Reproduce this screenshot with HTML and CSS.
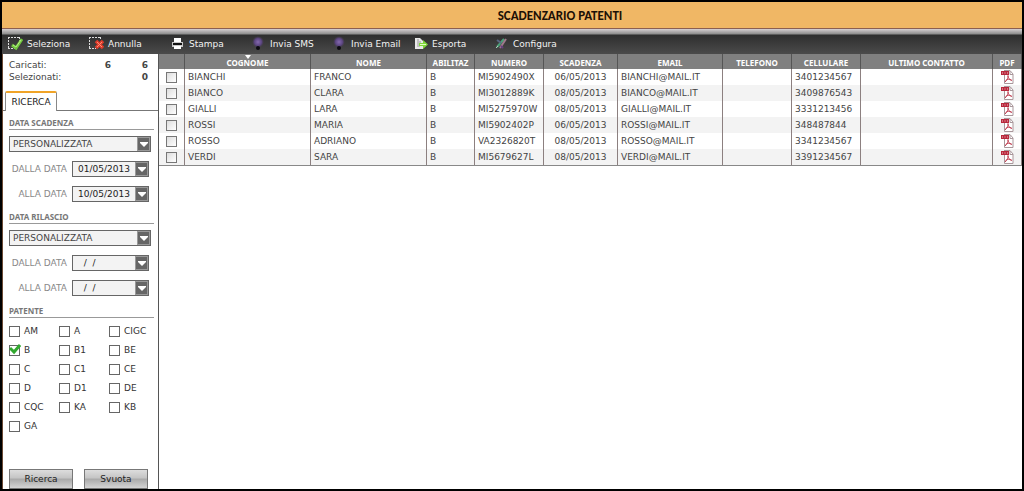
FILE: index.html
```html
<!DOCTYPE html>
<html lang="it">
<head>
<meta charset="utf-8">
<title>Scadenzario patenti</title>
<link rel="stylesheet" href="styles.css">
</head>
<body>
<svg class="defs" aria-hidden="true">
  <symbol id="pdf" viewBox="0 0 14 14">
    <path d="M4 .5h6l3 3.500v9.500H4.500V5" fill="#fff" stroke="#a9979b"/>
    <path d="M10 1v3.500h3" fill="none" stroke="#a9979b"/>
    <path d="M1 1h8v4H1z" fill="#b8283c"/>
    <path d="M2 3h1M4.500 3h1M7 3h1" stroke="#f0c4ca"/>
    <path d="M8 5.500c.7 2-1 5-3 6.500M8 5.500c-.5 2 1.500 4.500 4 5M5.500 10.500c2-1.500 4-1.500 6-.5" fill="none" stroke="#c4485a"/>
  </symbol>
  <symbol id="arrow" viewBox="0 0 8 5"><path d="M0 0h8v1L4 5 0 1z" fill="#fff"/></symbol>
  <symbol id="orb" viewBox="0 0 16 16">
    <circle cx="8" cy="6" r="6" fill="url(#violet)"/>
    <circle cx="8" cy="12" r="2" fill="#0b0910"/>
  </symbol>
  <radialGradient id="violet"><stop offset="0" stop-color="#8469ae"/><stop offset=".6" stop-color="#5b4580"/><stop offset="1" stop-color="#463a57" stop-opacity="0"/></radialGradient>
</svg>
<div class="app">
  <header class="title"><h1>SCADENZARIO PATENTI</h1></header>
  <nav class="toolbar">
    <button type="button" class="tool"><svg class="icon" viewBox="0 0 16 16"><path d="M1.500 1v12M1 1.500h12M1 12.500h8M12.500 1v5" fill="none" stroke="#ddd" stroke-dasharray="2 1"/><path d="M5 9l4 3 6-9" fill="none" stroke="#72c83e" stroke-width="3"/><path d="M6 9l3 2 5-7" fill="none" stroke="#b6ed86"/></svg>Seleziona</button>
    <button type="button" class="tool"><svg class="icon" viewBox="0 0 16 16"><path d="M1.500 1v12M1 1.500h12M1 12.500h7M12.500 1v3" fill="none" stroke="#ddd" stroke-dasharray="2 1"/><path d="M8 5l7 7M15 5l-7 7" stroke="#df3c2b" stroke-width="3.500"/><path d="M9 6l5 5M14 6l-5 5" stroke="#ff8c76"/></svg>Annulla</button>
    <button type="button" class="tool"><svg class="icon" viewBox="0 0 16 16"><path d="M5 2h7v4H5z" fill="#fff"/><path d="M3 6h11v5H3z" fill="#c9c9c9"/><path d="M4 7h9v2H4z" fill="#111"/><path d="M5 10h7v3H5z" fill="#fff"/></svg>Stampa</button>
    <button type="button" class="tool"><svg class="icon"><use href="#orb"/></svg>Invia SMS</button>
    <button type="button" class="tool"><svg class="icon"><use href="#orb"/></svg>Invia Email</button>
    <button type="button" class="tool"><svg class="icon" viewBox="0 0 16 16"><path d="M3 2h5l3 3v8H3z" fill="#e8e8e8"/><path d="M5 4h2M5 6h4M5 8h3M5 10h3" stroke="#999"/><path d="M7 7h4V4l5 4.500-5 4.500v-3H7z" fill="#7fd63c"/><path d="M8 8.500h6" stroke="#e0ffbd"/></svg>Esporta</button>
    <button type="button" class="tool"><svg class="icon" viewBox="0 0 16 16"><path d="M4 11l7-8" stroke="#4ba178" stroke-width="2"/><path d="M7 12l6-9" stroke="#a17a8d" stroke-width="2"/><path d="M4 4l4 3" stroke="#596782" stroke-width="2"/><path d="M8 10l2 2" stroke="#684080" stroke-width="2"/><path d="M3 12l2-2" stroke="#b0cfbd"/></svg>Configura</button>
  </nav>
  <div class="content">
    <aside class="sidebar">
      <dl class="counts">
        <dt>Caricati:</dt><dd>6</dd><dd>6</dd>
        <dt>Selezionati:</dt><dd></dd><dd>0</dd>
      </dl>
      <div class="tabs"><button type="button" class="tab">RICERCA</button></div>
      <form class="filters">
        <section class="group">
          <h2>DATA SCADENZA</h2>
          <div class="combo"><select aria-label="Data scadenza"><option>PERSONALIZZATA</option></select><span class="drop"><svg class="arrow"><use href="#arrow"/></svg></span></div>
          <div class="date"><label for="s1">DALLA DATA</label><div class="combo"><input id="s1" type="text" value="01/05/2013"><button type="button" class="drop" aria-label="Apri calendario"><svg class="arrow"><use href="#arrow"/></svg></button></div></div>
          <div class="date"><label for="s2">ALLA DATA</label><div class="combo"><input id="s2" type="text" value="10/05/2013"><button type="button" class="drop" aria-label="Apri calendario"><svg class="arrow"><use href="#arrow"/></svg></button></div></div>
        </section>
        <section class="group">
          <h2>DATA RILASCIO</h2>
          <div class="combo"><select aria-label="Data rilascio"><option>PERSONALIZZATA</option></select><span class="drop"><svg class="arrow"><use href="#arrow"/></svg></span></div>
          <div class="date"><label for="r1">DALLA DATA</label><div class="combo"><input id="r1" type="text" value="  /  /"><button type="button" class="drop" aria-label="Apri calendario"><svg class="arrow"><use href="#arrow"/></svg></button></div></div>
          <div class="date"><label for="r2">ALLA DATA</label><div class="combo"><input id="r2" type="text" value="  /  /"><button type="button" class="drop" aria-label="Apri calendario"><svg class="arrow"><use href="#arrow"/></svg></button></div></div>
        </section>
        <section class="group">
          <h2>PATENTE</h2>
          <div class="checks">
            <label><input type="checkbox">AM</label><label><input type="checkbox">A</label><label><input type="checkbox">CIGC</label>
            <label><input type="checkbox" checked><svg class="tick" viewBox="0 0 12 11"><path d="M1 4l4 4 6-7" fill="none" stroke="#31a82f" stroke-width="3"/></svg>B</label><label><input type="checkbox">B1</label><label><input type="checkbox">BE</label>
            <label><input type="checkbox">C</label><label><input type="checkbox">C1</label><label><input type="checkbox">CE</label>
            <label><input type="checkbox">D</label><label><input type="checkbox">D1</label><label><input type="checkbox">DE</label>
            <label><input type="checkbox">CQC</label><label><input type="checkbox">KA</label><label><input type="checkbox">KB</label>
            <label><input type="checkbox">GA</label>
          </div>
        </section>
        <div class="actions"><button type="button">Ricerca</button><button type="button">Svuota</button></div>
      </form>
    </aside>
    <main class="results">
      <table>
        <colgroup><col class="c-sel"><col class="c-surname"><col class="c-name"><col class="c-lic"><col class="c-num"><col class="c-exp"><col class="c-mail"><col class="c-tel"><col class="c-tel"><col class="c-last"><col class="c-pdf"></colgroup>
        <thead><tr><th></th><th><svg class="sort" viewBox="0 0 6 4"><path d="M0 0h6L3 4z" fill="#fff"/></svg>COGNOME</th><th>NOME</th><th>ABILITAZ</th><th>NUMERO</th><th>SCADENZA</th><th>EMAIL</th><th>TELEFONO</th><th>CELLULARE</th><th>ULTIMO CONTATTO</th><th>PDF</th></tr></thead>
        <tbody>
          <tr><td><input type="checkbox" aria-label="Bianchi Franco"></td><td>BIANCHI</td><td>FRANCO</td><td>B</td><td>MI5902490X</td><td>06/05/2013</td><td>BIANCHI@MAIL.IT</td><td></td><td>3401234567</td><td></td><td><svg class="pdf"><use href="#pdf"/></svg></td></tr>
          <tr><td><input type="checkbox" aria-label="Bianco Clara"></td><td>BIANCO</td><td>CLARA</td><td>B</td><td>MI3012889K</td><td>08/05/2013</td><td>BIANCO@MAIL.IT</td><td></td><td>3409876543</td><td></td><td><svg class="pdf"><use href="#pdf"/></svg></td></tr>
          <tr><td><input type="checkbox" aria-label="Gialli Lara"></td><td>GIALLI</td><td>LARA</td><td>B</td><td>MI5275970W</td><td>08/05/2013</td><td>GIALLI@MAIL.IT</td><td></td><td>3331213456</td><td></td><td><svg class="pdf"><use href="#pdf"/></svg></td></tr>
          <tr><td><input type="checkbox" aria-label="Rossi Maria"></td><td>ROSSI</td><td>MARIA</td><td>B</td><td>MI5902402P</td><td>06/05/2013</td><td>ROSSI@MAIL.IT</td><td></td><td>348487844</td><td></td><td><svg class="pdf"><use href="#pdf"/></svg></td></tr>
          <tr><td><input type="checkbox" aria-label="Rosso Adriano"></td><td>ROSSO</td><td>ADRIANO</td><td>B</td><td>VA2326820T</td><td>08/05/2013</td><td>ROSSO@MAIL.IT</td><td></td><td>3341234567</td><td></td><td><svg class="pdf"><use href="#pdf"/></svg></td></tr>
          <tr><td><input type="checkbox" aria-label="Verdi Sara"></td><td>VERDI</td><td>SARA</td><td>B</td><td>MI5679627L</td><td>08/05/2013</td><td>VERDI@MAIL.IT</td><td></td><td>3391234567</td><td></td><td><svg class="pdf"><use href="#pdf"/></svg></td></tr>
        </tbody>
      </table>
    </main>
  </div>
</div>
</body>
</html>
```
FILE: styles.css
```css
* { box-sizing: border-box; }

body {
  margin: 0;
  background: #000;
  color: #444;
  font: 9px/12px Verdana, "DejaVu Sans", sans-serif;
}

button, input, select {
  margin: 0;
  padding: 0;
  border: 0;
  background: none;
  color: inherit;
  font: inherit;
  appearance: none;
}

h1, h2, dl, dd { margin: 0; }

.defs {
  position: absolute;
  width: 0;
  height: 0;
}

.app {
  display: flex;
  flex-direction: column;
  min-height: 100vh;
  border: 2px solid #000;
}

.title {
  padding: 5px 0 4px 96px;
  border-bottom: 1px solid #8c5f50;
  background: #f0b765;
  text-align: center;
}

.title h1 {
  color: #1c1006;
  font: bold 13px/17px Carlito, "Open Sans", sans-serif;
}

.toolbar {
  display: flex;
  padding: 5px 0 0 5px;
  background: linear-gradient(#d6d0d2, #8c8c8c 5px, #2e2e2e 6px, #4b4b4b);
}

.tool {
  display: flex;
  flex: 0 0 81px;
  align-items: center;
  gap: 4px;
  height: 20px;
  color: #f2f2f2;
  white-space: nowrap;
}

.icon {
  flex: none;
  width: 16px;
  height: 16px;
}

.content {
  display: flex;
  flex: 1;
  border-left: 1px solid #6b4a35;
  background: #fff;
}

.sidebar {
  flex: 0 0 156px;
  min-width: 0;
  border-right: 1px solid #555;
}

.counts {
  display: grid;
  grid-template-columns: 66px 36px 37px;
  padding: 5px 5px 8px 6px;
}

.counts dd {
  font-weight: bold;
  text-align: right;
}

.tabs {
  display: flex;
  padding-left: 2px;
  border-bottom: 1px solid #777;
}

.tab {
  width: 52px;
  height: 20px;
  margin-bottom: -1px;
  border: 1px solid #888;
  border-top: 2px solid #f0a428;
  border-bottom: 0;
  border-radius: 2px 2px 0 0;
  background: #fff;
  color: #222;
}

.filters { padding: 5px 4px 0 6px; }

.group { margin-bottom: 8px; }

.group h2 {
  margin-bottom: 6px;
  border-bottom: 1px solid #999;
  color: #777;
  font: bold 8px/13px "Noto Sans", sans-serif;
}

.combo {
  display: flex;
  width: 142px;
  height: 16px;
  border: 1px solid #666;
  background: #f3f3f3;
}

.combo select, .combo input {
  flex: 1;
  min-width: 0;
  padding-left: 3px;
  white-space: pre;
}

.combo input { padding-left: 5px; }

.drop {
  display: flex;
  flex: 0 0 13px;
  align-items: center;
  justify-content: center;
  border: 1px solid #999;
  background: #666;
}

.arrow {
  width: 8px;
  height: 5px;
}

.date {
  display: flex;
  align-items: center;
  justify-content: space-between;
  width: 140px;
  margin-top: 9px;
  color: #888;
}

.date label {
  width: 58px;
  text-align: right;
}

.date .combo {
  width: 77px;
  color: #222;
}

.checks {
  display: grid;
  grid-template-columns: 50px 50px 1fr;
  row-gap: 7px;
  padding-top: 1px;
}

.checks label {
  position: relative;
  display: flex;
  align-items: center;
  gap: 4px;
  color: #333;
}

.checks input {
  width: 11px;
  height: 11px;
  border: 1px solid #666;
  background: #fff;
}

.tick {
  position: absolute;
  top: 0;
  left: 0;
  width: 12px;
  height: 11px;
}

.actions {
  display: flex;
  gap: 11px;
  padding-top: 29px;
}

.actions button {
  width: 64px;
  height: 20px;
  border: 1px solid #777;
  background: linear-gradient(#ddd, #c4c4c4 45%, #a9a9a9 50%, #d4d4d4);
  color: #222;
}

.results {
  flex: 1;
  min-width: 0;
}

table {
  width: 100%;
  border-collapse: separate;
  border-spacing: 0;
  border-bottom: 1px solid #888;
  table-layout: fixed;
}

.c-sel { width: 26px; }
.c-surname { width: 126px; }
.c-name { width: 116px; }
.c-lic { width: 48px; }
.c-num { width: 69px; }
.c-exp { width: 74px; }
.c-mail { width: 105px; }
.c-tel { width: 69px; }
.c-last { width: 132px; }
.c-pdf { width: 29px; }

th {
  position: relative;
  height: 15px;
  padding: 3px 0 0;
  border-right: 1px solid #555;
  background: #808080;
  color: #fff;
  font: bold 8px/12px "Noto Sans", sans-serif;
}

.sort {
  position: absolute;
  top: 1px;
  left: calc(50% - 3px);
  width: 6px;
  height: 4px;
}

td {
  height: 16px;
  padding: 0 0 0 3px;
  border-right: 1px solid #8c8080;
  line-height: 16px;
  white-space: nowrap;
}

tbody tr:nth-child(even) { background: #f3f3f3; }

td:first-child, td:last-child, td:nth-child(6) {
  padding: 0;
  text-align: center;
}

td input {
  display: block;
  width: 11px;
  height: 11px;
  margin: 0 auto;
  border: 1px solid #777;
  background: linear-gradient(135deg, #ddd, #fff);
}

.pdf {
  display: block;
  width: 14px;
  height: 14px;
  margin: 0 auto;
}
```
